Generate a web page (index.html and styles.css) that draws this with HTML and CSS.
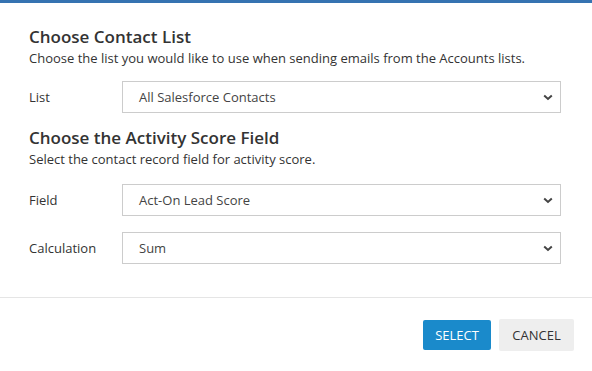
FILE: index.html
```html
<!DOCTYPE html>
<html>
<head>
<meta charset="utf-8">
<link rel="stylesheet" href="styles.css">
</head>
<body>
<div class="modal">
  <div class="topbar"></div>
  <div class="content">
    <h2 class="title">Choose Contact List</h2>
    <p class="desc">Choose the list you would like to use when sending emails from the Accounts lists.</p>
    <div class="row first">
      <label class="label">List</label>
      <div class="select">
        <span class="value">All Salesforce Contacts</span>
        <svg class="chev" width="10" height="7" viewBox="0 0 10 7"><path d="M1.2 1.5 L5 5 L8.8 1.5" fill="none" stroke="#444" stroke-width="2"/></svg>
      </div>
    </div>
    <h2 class="title second">Choose the Activity Score Field</h2>
    <p class="desc">Select the contact record field for activity score.</p>
    <div class="row group">
      <label class="label">Field</label>
      <div class="select">
        <span class="value">Act-On Lead Score</span>
        <svg class="chev" width="10" height="7" viewBox="0 0 10 7"><path d="M1.2 1.5 L5 5 L8.8 1.5" fill="none" stroke="#444" stroke-width="2"/></svg>
      </div>
    </div>
    <div class="row next">
      <label class="label">Calculation</label>
      <div class="select">
        <span class="value">Sum</span>
        <svg class="chev" width="10" height="7" viewBox="0 0 10 7"><path d="M1.2 1.5 L5 5 L8.8 1.5" fill="none" stroke="#444" stroke-width="2"/></svg>
      </div>
    </div>
  </div>
  <div class="footer">
    <button class="btn primary">SELECT</button>
    <button class="btn secondary">CANCEL</button>
  </div>
</div>
</body>
</html>
```

FILE: styles.css
```css
html, body {
  margin: 0;
  padding: 0;
  background: #fff;
}
body {
  font-family: "Open Sans", "Liberation Sans", sans-serif;
  color: #333;
  width: 592px;
  height: 371px;
  overflow: hidden;
}
.topbar {
  height: 3px;
  background: #3573b1;
}
.content {
  padding: 22px 31px 33px 29px;
}
.title {
  margin: 0;
  font-size: 17px;
  line-height: 24px;
  font-weight: 600;
  color: #333;
}
.title.second {
  margin-top: 13px;
}
.desc {
  margin: 0;
  font-size: 13px;
  line-height: 18px;
  color: #333;
}
.row {
  display: flex;
  align-items: center;
}
.row.first {
  margin-top: 14px;
}
.row.group {
  margin-top: 16px;
}
.row.next {
  margin-top: 16px;
}
.label {
  width: 93px;
  font-size: 13px;
  color: #333;
}
.select {
  flex: 1;
  height: 30px;
  border: 1px solid #ccc;
  display: flex;
  align-items: center;
  justify-content: space-between;
  padding: 0 7px 0 16px;
  font-size: 13px;
  color: #444;
}
.chev {
  display: block;
}
.footer {
  border-top: 1px solid #e5e5e5;
  display: flex;
  justify-content: flex-end;
  gap: 8px;
  padding: 21px 18px 0 0;
}
.btn {
  font-family: "Open Sans", "Liberation Sans", sans-serif;
  font-size: 13px;
  border: none;
  border-radius: 2px;
  cursor: pointer;
}
.btn.primary {
  background: #1a8acb;
  color: #fff;
  width: 68px;
  margin-top: 1px;
  height: 30px;
}
.btn.secondary {
  background: #eeeeee;
  color: #333;
  width: 75px;
  height: 32px;
}
```
